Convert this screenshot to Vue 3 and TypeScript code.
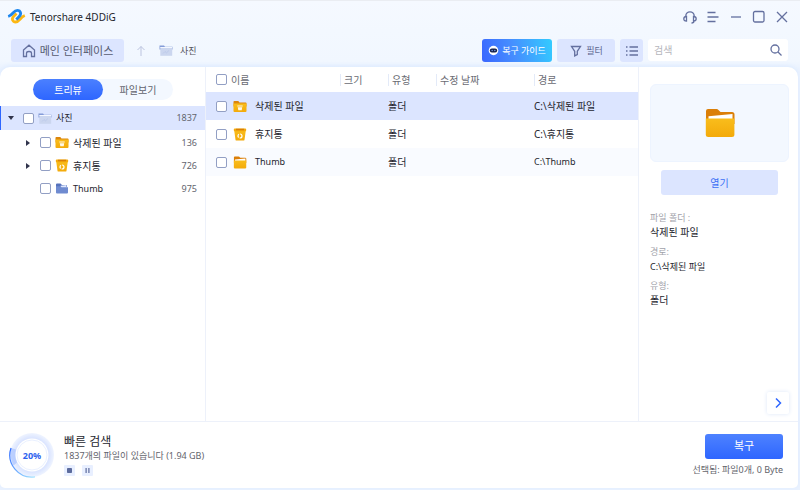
<script setup lang="ts">
import { ref } from 'vue'

type IconName = 'ghost' | 'deleted' | 'bin' | 'blue' | 'folder'

interface Entry {
  name: string
  icon: IconName
  count: number
  expandable: boolean
  rowIcon: IconName
  latin: boolean
}

const entries: Entry[] = [
  { name: '삭제된 파일', icon: 'deleted', rowIcon: 'deleted', count: 136, expandable: true, latin: false },
  { name: '휴지통', icon: 'bin', rowIcon: 'bin', count: 726, expandable: true, latin: false },
  { name: 'Thumb', icon: 'blue', rowIcon: 'folder', count: 975, expandable: false, latin: true },
]

const columns = ['크기', '유형', '수정 날짜', '경로']
const details = [
  { label: '파일 폴더 :', value: '삭제된 파일', latin: false },
  { label: '경로:', value: 'C:\\삭제된 파일', latin: true },
  { label: '유형:', value: '폴더', latin: false },
]
const view = ref<'tree' | 'file'>('tree')
const selected = ref(0)
const query = ref('')
</script>

<template>
  <svg class="defs" width="0" height="0" aria-hidden="true">
    <defs>
      <linearGradient id="gold" x1="0" y1="0" x2="0" y2="1">
        <stop offset="0" stop-color="#f9bd1c" />
        <stop offset="1" stop-color="#f3aa0a" />
      </linearGradient>
      <linearGradient id="arc" x1="0" y1="0" x2="1" y2="1">
        <stop offset="0" stop-color="#2f6cff" />
        <stop offset="1" stop-color="#a5e4ff" />
      </linearGradient>
      <radialGradient id="halo">
        <stop offset="0.72" stop-color="#d6e1ff" />
        <stop offset="1" stop-color="#eff4ff" />
      </radialGradient>
      <symbol id="i-ghost" viewBox="0 0 14 12">
        <path d="M.5 1h4.500l1 1.300h7.500V5H.5z" fill="#849cd8" />
        <path d="M1.300 3h11.900v8.300H1.300z" fill="#cbd6ef" />
        <path d="M1.300 3h11.900" stroke="#f4f7ff" />
        <path d="M4 9l2-2 1.500 1.300L10 6" fill="none" stroke="#b9c7e8" stroke-width="0.8" />
      </symbol>
      <symbol id="i-deleted" viewBox="0 0 14 12">
        <path d="M.5 1.300Q.5.500 1.300.5h4L6.500 2h6.200q.8 0 .8.8V6H.5z" fill="#dc860c" />
        <path d="M.5 3h13v7.600q0 .9-.9.900H1.400q-.9 0-.9-.9z" fill="url(#gold)" />
        <path d="M4.300 5h5.400v1.100H4.300zM4.800 6.700h4.400L8.700 9.800H5.300z" fill="#fff" opacity=".9" />
      </symbol>
      <symbol id="i-bin" viewBox="0 0 14 13">
        <path d="M1.200 2.500h11.600l-1.300 9.200q-.1.900-1 .9h-7q-.9 0-1-.9z" fill="url(#gold)" />
        <path d="M.8 1.500Q.8.500 1.800.5h10.400q1 0 1 1v.7q0 1-1 1H1.800q-1 0-1-1z" fill="#f4ab0b" />
        <path d="M3 1.500h8" stroke="#d97f08" stroke-width="1.500" />
        <circle cx="7" cy="8" r="2" fill="none" stroke="#fff" stroke-width="1.200" stroke-dasharray="3.200 1" />
      </symbol>
      <symbol id="i-blue" viewBox="0 0 14 12">
        <path d="M1 2Q1 1 2 1h3.500L7 2.600h5v2H1z" fill="#5672bc" />
        <path d="M5.500 3.300l6-.8v3h-6z" fill="#dfe8ff" />
        <path d="M1 3.800h4.500l1 1H13V10q0 1-1 1H2q-1 0-1-1z" fill="#6f8bd0" />
      </symbol>
      <symbol id="i-folder" viewBox="0 0 30 30">
        <path d="M1 3Q1 1 3 1h8.500q1.200 0 2 .9L15.500 4H27q2.500 0 2.500 2.500V16H1z" fill="#db7f08" />
        <path d="M3.500 8.200L27.500 6v8h-24z" fill="#fff" />
        <path d="M.8 10.500h28.600v16q0 2.500-2.500 2.500H3.300Q.8 29 .8 26.500z" fill="url(#gold)" />
      </symbol>
    </defs>
  </svg>

  <div class="window">
    <header>
      <div class="titlebar">
        <svg class="logo" viewBox="0 0 19 17" aria-hidden="true">
          <g fill="none" stroke-width="2.800">
            <path d="M17.800 7.500Q15.300 8.500 13 11.300q-3.500 4-6.500 2Q4 11 7 8l2.500-2.500" stroke="#fdb813" />
            <path d="M1.200 8.500Q3.700 7.700 6 5q3.500-4 6.500-2 2.500 2.500-.5 5.700L9.300 11.500" stroke="#1c86ee" />
          </g>
        </svg>
        <h1>Tenorshare 4DDiG</h1>
        <div class="controls">
          <button type="button" aria-label="고객 지원">
            <svg viewBox="0 0 14 14">
              <path d="M2.800 7V6a4.200 4.200 0 0 1 8.400 0v1M3.500 6.500v4.500Q.8 11 .8 8.800T3.500 6.500zM10.500 6.500V11q2.700 0 2.700-2.200t-2.700-2.300zM11 11q0 2-2.500 2" />
            </svg>
          </button>
          <button type="button" aria-label="메뉴">
            <svg viewBox="0 0 14 14"><path d="M1.500 2.500h8M1.500 7h11M1.500 11.500h8" /></svg>
          </button>
          <button type="button" aria-label="최소화">
            <svg viewBox="0 0 14 14"><path d="M2 7h10" /></svg>
          </button>
          <button type="button" aria-label="최대화">
            <svg viewBox="0 0 14 14"><rect x="1.500" y="1.500" width="10.500" height="10.500" rx="1.500" /></svg>
          </button>
          <button type="button" aria-label="닫기">
            <svg viewBox="0 0 14 14"><path d="M2 2l10 10M12 2L2 12" /></svg>
          </button>
        </div>
      </div>

      <div class="toolbar">
        <button type="button" class="soft home">
          <svg class="line" viewBox="0 0 14 14">
            <path d="M1.500 6L7 1.200 12.500 6v6.500h-3V9.300Q9.500 7.500 7 7.500T4.500 9.300v3.200h-3z" />
          </svg>
          메인 인터페이스
        </button>
        <button type="button" class="up" aria-label="상위 폴더">
          <svg viewBox="0 0 14 14"><path d="M7 12V2.500M3.500 6L7 2.500 10.500 6" /></svg>
        </button>
        <svg class="icon"><use href="#i-ghost" /></svg>
        <span class="crumb">사진</span>

        <div class="tools">
          <button type="button" class="guide">
            <svg viewBox="0 0 12 12">
              <circle cx="6" cy="6" r="5.200" fill="#fff" />
              <rect x="2" y="3.800" width="8" height="4.400" rx="2.200" fill="#16204a" />
              <circle cx="4.500" cy="6" r=".7" fill="#8ab4ff" />
              <circle cx="7.500" cy="6" r=".7" fill="#8ab4ff" />
            </svg>
            복구 가이드
          </button>
          <button type="button" class="soft filter">
            <svg class="line" viewBox="0 0 14 14"><path d="M2.500 2.500h9L8.300 7.300v3.200l-2.600 1.400V7.300z" /></svg>
            필터
          </button>
          <button type="button" class="soft list" aria-label="목록 보기">
            <svg class="line" viewBox="0 0 14 14">
              <path d="M4.500 3H13M4.500 7H13M4.500 11H13M1 3h1.500M1 7h1.500M1 11h1.500" />
            </svg>
          </button>
          <label class="search">
            <input v-model="query" type="text" placeholder="검색" aria-label="검색" />
            <svg class="line" viewBox="0 0 14 14"><circle cx="6" cy="6" r="4" /><path d="M9 9l3.500 3.500" /></svg>
          </label>
        </div>
      </div>
    </header>

    <div class="panel">
      <main>
        <nav class="side">
          <div class="switch">
            <button type="button" :class="{ on: view === 'tree' }" @click="view = 'tree'">트리뷰</button>
            <button type="button" :class="{ on: view === 'file' }" @click="view = 'file'">파일보기</button>
          </div>
          <div class="node root">
            <svg class="caret" viewBox="0 0 6 6"><path d="M0 1h6L3 5z" /></svg>
            <input id="tree-root" type="checkbox" />
            <svg class="icon"><use href="#i-ghost" /></svg>
            <label for="tree-root" class="small">사진</label>
            <span class="count">1837</span>
          </div>
          <div class="branch">
            <div v-for="(e, i) in entries" :key="e.name" class="node">
              <svg class="caret" viewBox="0 0 6 6"><path v-if="e.expandable" d="M1 0v6l4-3z" /></svg>
              <input :id="`tree-${i}`" type="checkbox" />
              <svg class="icon"><use :href="`#i-${e.icon}`" /></svg>
              <label :for="`tree-${i}`" :class="{ small: e.latin }">{{ e.name }}</label>
              <span class="count">{{ e.count }}</span>
            </div>
          </div>
        </nav>

        <section class="files">
          <table>
            <colgroup>
              <col class="c-name" /><col class="c-size" /><col class="c-type" /><col class="c-date" /><col />
            </colgroup>
            <thead>
              <tr>
                <th class="first">
                  <div class="cell">
                    <input id="all" type="checkbox" />
                    <label for="all">이름</label>
                  </div>
                </th>
                <th v-for="c in columns" :key="c"><span class="head">{{ c }}</span></th>
              </tr>
            </thead>
            <tbody>
              <tr v-for="(e, i) in entries" :key="e.name" :class="{ selected: selected === i }" @click="selected = i">
                <td class="first">
                  <div class="cell">
                    <input :id="`row-${i}`" type="checkbox" />
                    <svg class="icon"><use :href="`#i-${e.rowIcon}`" /></svg>
                    <label :for="`row-${i}`" :class="{ small: e.latin }">{{ e.name }}</label>
                  </div>
                </td>
                <td></td>
                <td>폴더</td>
                <td></td>
                <td :class="{ small: e.latin }">C:\{{ e.name }}</td>
              </tr>
            </tbody>
          </table>
        </section>

        <aside>
          <div class="preview"><svg viewBox="0 0 30 30"><use href="#i-folder" /></svg></div>
          <button type="button" class="soft open">열기</button>
          <dl>
            <template v-for="d in details" :key="d.label">
              <dt>{{ d.label }}</dt>
              <dd :class="{ small: d.latin }">{{ d.value }}</dd>
            </template>
          </dl>
          <button type="button" class="next" aria-label="다음">
            <svg viewBox="0 0 12 12"><path d="M4 1.500L8.500 6 4 10.500" /></svg>
          </button>
        </aside>
      </main>

      <footer>
        <svg class="ring" viewBox="0 0 46 46" role="img" aria-label="20%">
          <circle cx="23" cy="23" r="22" fill="url(#halo)" />
          <circle cx="23" cy="23" r="16.500" fill="#fff" />
          <circle cx="23" cy="23" r="15" fill="none" stroke="#dfe9ff" stroke-width=".7" />
          <path d="M2 16L7 17.500Q5 24 8 30.500L4.500 33.500Q0 25 2 16z" fill="#a9c3ff" opacity=".7" />
          <path d="M2 16A22 22 0 0 0 26 44.800" fill="none" stroke="url(#arc)" stroke-width="1.200" />
          <text x="23" y="26.500" text-anchor="middle">20%</text>
        </svg>
        <div class="scan">
          <h2>빠른 검색</h2>
          <p>1837개의 파일이 있습니다 (1.94 GB)</p>
          <div class="player">
            <button type="button" aria-label="중지">
              <svg viewBox="0 0 11 11"><rect x="3" y="3" width="5" height="5" rx=".8" /></svg>
            </button>
            <button type="button" aria-label="일시정지">
              <svg viewBox="0 0 11 11"><path d="M3.500 3h1.200v5H3.500zM6.300 3h1.200v5H6.300z" /></svg>
            </button>
          </div>
        </div>
        <div class="action">
          <button type="button" class="recover">복구</button>
          <p>선택됨: 파일0개, 0 Byte</p>
        </div>
      </footer>
    </div>
  </div>
</template>

<style>
body {
  margin: 0;
  background: #eef3fc;
}
</style>

<style scoped>
* {
  box-sizing: border-box;
}
.defs {
  position: absolute;
}
.window {
  min-height: 100vh;
  display: flex;
  flex-direction: column;
  padding: 0 2px 2px 0;
  background: linear-gradient(#f5f9ff, #f1f7ff 60px, #eaf2ff 68px);
  border-top: 1px solid #eaedf2;
  color: #25262e;
  font: 10px/14px "Noto Sans", "Noto Sans CJK KR", sans-serif;
}
h1, h2, p, dl, dd {
  margin: 0;
  font-weight: 400;
}
button {
  font: inherit;
  color: inherit;
  padding: 0;
  border: 0;
  background: none;
  display: flex;
  align-items: center;
  justify-content: center;
}
svg {
  flex: none;
}
.small {
  font-size: 9px;
}
.titlebar {
  display: flex;
  align-items: center;
  height: 31px;
  padding: 0 5px 0 7px;
}
.logo {
  width: 19px;
  height: 17px;
}
h1 {
  font-size: 10px;
  margin-left: 4px;
}
.controls {
  display: flex;
  margin-left: auto;
}
.controls button {
  width: 23px;
  height: 23px;
}
.controls svg,
.line {
  width: 14px;
  height: 14px;
  fill: none;
  stroke: #64709f;
  stroke-width: 1.300;
}
.toolbar {
  display: flex;
  align-items: center;
  padding: 7px 10px 5px 11px;
}
.soft {
  height: 23px;
  background: #dce5ff;
  border-radius: 3px;
  color: #5c6790;
}
.home {
  width: 113px;
  gap: 4px;
  font-size: 11px;
  color: #565b70;
}
.up {
  width: 14px;
  margin: 0 11px 0 10px;
}
.up svg {
  width: 14px;
  height: 14px;
  fill: none;
  stroke: #bcc4df;
}
.icon {
  width: 14px;
  height: 13px;
}
.crumb {
  font-size: 9px;
  margin-left: 7px;
  color: #55565e;
}
.tools {
  display: flex;
  gap: 5px;
  margin-left: auto;
}
.guide {
  width: 70px;
  height: 23px;
  gap: 3px;
  border-radius: 3px;
  color: #fff;
  font-size: 9px;
  background: linear-gradient(75deg, #3a66ff, #468eff 45%, #33ccff);
}
.guide svg {
  width: 11px;
  height: 11px;
}
.filter {
  width: 58px;
  gap: 3px;
  font-size: 9px;
}
.list {
  width: 23px;
}
.search {
  display: flex;
  align-items: center;
  width: 140px;
  height: 22px;
  padding: 0 5px 0 6px;
  background: #fff;
  border-radius: 3px;
}
.search input {
  flex: 1;
  min-width: 0;
  padding: 0;
  border: 0;
  outline: 0;
  background: none;
  font: inherit;
}
.search input::placeholder {
  color: #b6b6bc;
}
.panel {
  flex: 1;
  display: flex;
  flex-direction: column;
  background: #fff;
  border-radius: 10px 10px 5px 5px;
  box-shadow: 0 -1px 4px #dceaff;
}
main {
  flex: 1;
  display: grid;
  grid-template-columns: 206px 1fr 160px;
}
.side {
  border-right: 1px solid #edf1fa;
}
.switch {
  display: flex;
  width: 140px;
  margin: 12px auto 6px 33px;
  border-radius: 11px;
  background: #f3f8ff;
}
.switch button {
  flex: 1;
  height: 21px;
  border-radius: 11px;
  color: #62646e;
}
.switch .on {
  background: linear-gradient(#4b80ff, #2e66ff);
  color: #fff;
}
.node {
  display: flex;
  align-items: center;
  height: 23px;
  padding: 0 8px 0 25px;
}
.node.root {
  height: 24px;
  padding-left: 7px;
  border-left: 1px solid #2e66ff;
  background: #dce5ff;
}
.branch {
  padding-top: 1px;
}
.caret {
  width: 6px;
  height: 6px;
  margin-right: 9px;
  fill: #30344c;
}
.node .icon {
  margin: 0 4px;
}
.count {
  margin-left: auto;
  font-size: 9px;
  color: #63656e;
}
input[type="checkbox"] {
  appearance: none;
  flex: none;
  width: 11px;
  height: 11px;
  margin: 0;
  border: 1px solid #929fc4;
  border-radius: 2px;
  background: #fff;
}
input[type="checkbox"]:checked {
  background: #2e66ff;
}
table {
  width: 100%;
  table-layout: fixed;
  border-collapse: collapse;
}
.c-name {
  width: 134px;
}
.c-size,
.c-type {
  width: 48px;
}
.c-date {
  width: 98px;
}
th,
td {
  padding: 0;
  text-align: left;
  font-weight: 400;
}
th {
  height: 25px;
  color: #6a6b73;
}
td {
  height: 28px;
}
.first {
  padding-left: 10px;
}
.cell {
  display: flex;
  align-items: center;
}
th .cell {
  gap: 4px;
}
td .icon {
  margin: 0 8px 0 6px;
}
.head {
  display: block;
  padding-left: 3px;
  border-left: 1px solid #e3eaf8;
  line-height: 12px;
}
tbody tr:nth-child(3) {
  background: #f9fbff;
}
tbody tr.selected {
  background: #dce5ff;
}
aside {
  display: flex;
  flex-direction: column;
  padding: 17px 9px 7px 11px;
  border-left: 1px solid #edf1fa;
}
.preview {
  display: flex;
  align-items: center;
  justify-content: center;
  height: 78px;
  border: 1px solid #edf4ff;
  border-radius: 6px;
  background: #f3f8ff;
}
.preview svg {
  width: 30px;
  height: 30px;
}
.open {
  height: 25px;
  margin: 8px 11px 15px;
  color: #3d70f5;
}
dt {
  font-size: 9px;
  line-height: 15px;
  color: #a1a2aa;
}
dd {
  line-height: 15px;
  margin-bottom: 4px;
}
.next {
  width: 22px;
  height: 22px;
  margin: auto 0 0 auto;
  border-radius: 2px;
  background: #fff;
  box-shadow: 0 0 4px #dde6f8;
}
.next svg {
  width: 12px;
  height: 12px;
  fill: none;
  stroke: #2e66ff;
  stroke-width: 1.500;
}
footer {
  display: flex;
  align-items: center;
  height: 67px;
  padding: 0 15px 0 9px;
  border-top: 1px solid #edf1fa;
}
.ring {
  width: 46px;
  height: 46px;
}
.ring text {
  font-size: 9px;
  font-weight: 700;
  fill: #2e62ee;
}
.scan {
  margin-left: 9px;
}
h2 {
  font-size: 12px;
  line-height: 14px;
}
.scan p,
.action p {
  font-size: 9px;
  color: #63646c;
}
.player {
  display: flex;
  gap: 7px;
  margin-top: 2px;
}
.player button {
  width: 11px;
  height: 11px;
  background: #e8efff;
  border-radius: 1px;
}
.player svg {
  width: 11px;
  height: 11px;
  fill: #5c6b9d;
}
.action {
  display: flex;
  flex-direction: column;
  align-items: flex-end;
  gap: 4px;
  margin-left: auto;
}
.recover {
  width: 78px;
  height: 25px;
  border-radius: 3px;
  background: linear-gradient(#4e82ff, #2e66ff);
  color: #fff;
  font-size: 11px;
}
</style>
